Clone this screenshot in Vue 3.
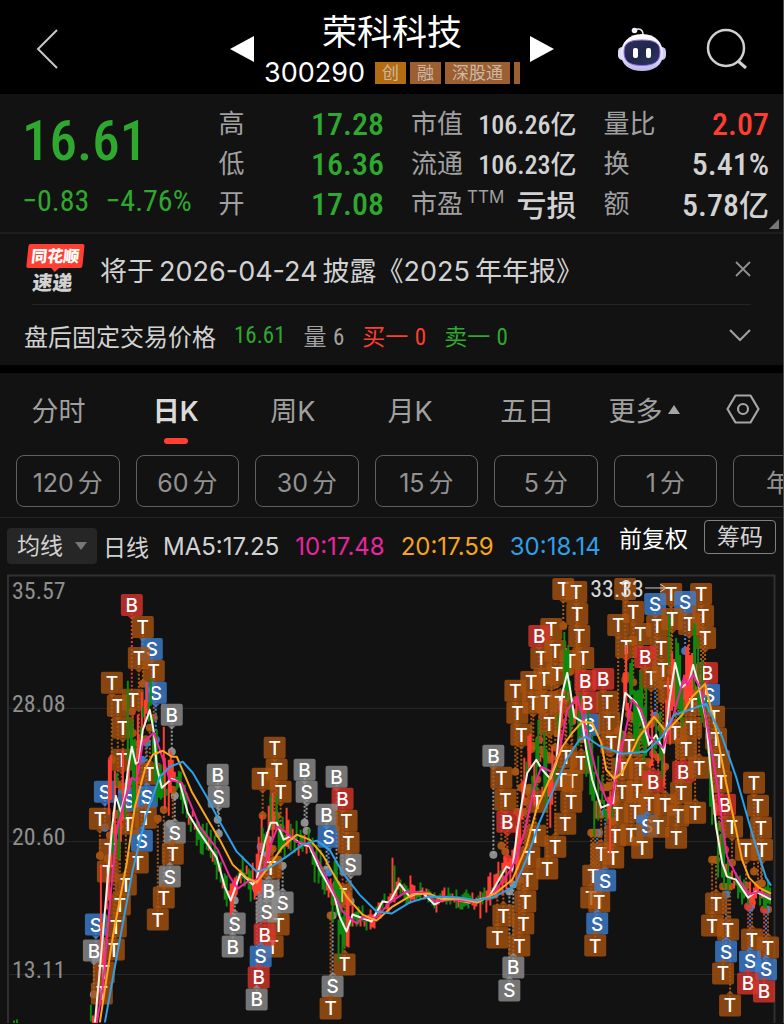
<template>
  <div class="stock-page">
    <header class="top-bar">
      <button class="icon-btn back" aria-label="返回">
        <svg width="24" height="42" viewBox="0 0 24 42"><path d="M21 2 2 21 21 40" fill="none" stroke="#c8c8c8" stroke-width="2" /></svg>
      </button>
      <div class="title-wrap">
        <button class="icon-btn" aria-label="上一只">
          <svg width="24" height="26" viewBox="0 0 24 26"><path d="M24 0V26L0 13Z" fill="#fff" /></svg>
        </button>
        <div class="title">
          <h1>荣科科技</h1>
          <div class="code-row">
            <span class="code">300290</span>
            <span class="tag tag-main">创</span>
            <span class="tag">融</span>
            <span class="tag">深股通</span>
            <span class="tag tag-cut"></span>
          </div>
        </div>
        <button class="icon-btn" aria-label="下一只">
          <svg width="24" height="26" viewBox="0 0 24 26"><path d="M0 0V26L24 13Z" fill="#fff" /></svg>
        </button>
      </div>
      <div class="top-actions">
        <button class="icon-btn" aria-label="智能助手">
          <svg width="48" height="46" viewBox="0 0 48 46">
            <defs>
              <linearGradient id="shell" x1="0" y1="0" x2="0" y2="1">
                <stop offset="0" stop-color="#ffffff" />
                <stop offset="0.6" stop-color="#e4e2fa" />
                <stop offset="1" stop-color="#b9b5ee" />
              </linearGradient>
              <linearGradient id="visor" x1="0" y1="0" x2="1" y2="1">
                <stop offset="0" stop-color="#30305c" />
                <stop offset="0.5" stop-color="#20264a" />
                <stop offset="1" stop-color="#303763" />
              </linearGradient>
            </defs>
            <path d="M17 4C21 2 25 3 25 9" fill="none" stroke="#e6e6f5" stroke-width="1.500" />
            <circle cx="16.500" cy="4.500" r="2.800" fill="#f2f2fb" />
            <rect x="0" y="21" width="9" height="13" rx="4.500" fill="#dddcf5" />
            <rect x="39" y="21" width="9" height="13" rx="4.500" fill="#cfcdf2" />
            <path d="M24 8C38 8 45 17 45 28C45 39 36 45 24 45C12 45 3 39 3 28C3 17 10 8 24 8Z" fill="url(#shell)" />
            <path d="M24 14C37 14 42 17 42 26C42 36 36 39.500 24 39.500C12 39.500 6 36 6 26C6 17 11 14 24 14Z" fill="url(#visor)" stroke="#8e6ce8" stroke-width="1" />
            <rect x="15" y="22" width="5" height="10" rx="2" fill="#fff" />
            <rect x="28" y="22" width="5" height="10" rx="2" fill="#fff" />
          </svg>
        </button>
        <button class="icon-btn" aria-label="搜索">
          <svg width="42" height="42" viewBox="0 0 42 42" fill="none" stroke="#d0d0d0" stroke-width="2.500">
            <circle cx="20" cy="20" r="18" />
            <path d="M32 33 40 40" stroke-width="3" />
          </svg>
        </button>
      </div>
    </header>

    <section class="quote">
      <div class="price-box">
        <div class="price">16.61</div>
        <div class="change"><span>−0.83</span><span>−4.76%</span></div>
      </div>
      <dl v-for="(col, i) in quoteCols" :key="i" class="quote-col">
        <div v-for="item in col" :key="item.label">
          <dt>{{ item.label }}<sup v-if="item.sup">{{ item.sup }}</sup></dt>
          <dd :class="item.cls">{{ item.value }}<span v-if="item.unit" class="unit">{{ item.unit }}</span></dd>
        </div>
      </dl>
      <span class="corner"></span>
    </section>

    <section class="notice">
      <div class="notice-row news">
        <div class="logo"><span class="logo-top">同花顺</span><span class="logo-bottom">速递</span></div>
        <a href="#" class="news-link">将于<span class="latin">2026-04-24</span>披露《<span class="latin year">2025</span>年年报》</a>
        <button class="icon-btn close" aria-label="关闭">
          <svg width="16" height="16" viewBox="0 0 16 16"><path d="M1 1 15 15M15 1 1 15" stroke="#909090" stroke-width="1.800" /></svg>
        </button>
      </div>
      <div class="notice-row after">
        <span class="after-name">盘后固定交易价格</span>
        <span class="num green">16.61</span>
        <span class="muted">量 <b class="num">6</b></span>
        <span class="red">买一 <b class="num">0</b></span>
        <span class="green">卖一 <b class="num">0</b></span>
        <button class="icon-btn close" aria-label="展开">
          <svg width="22" height="13" viewBox="0 0 22 13"><path d="M1 1 11 11 21 1" fill="none" stroke="#a0a0a0" stroke-width="2" /></svg>
        </button>
      </div>
    </section>

    <nav class="tabs">
      <button
        v-for="tab in tabs"
        :key="tab"
        :class="{ active: tab === currentTab }"
        @click="currentTab = tab"
      >{{ tab }}<i v-if="tab === '更多'" class="up"></i></button>
      <button class="gear" aria-label="设置">
        <svg width="34" height="30" viewBox="0 0 34 30" fill="none" stroke="#a6a6a6" stroke-width="2.200">
          <path d="M9.500 1.500H24.500L32.500 15 24.500 28.500H9.500L1.500 15Z" stroke-linejoin="round" />
          <circle cx="17" cy="15" r="5" />
        </svg>
      </button>
    </nav>

    <div class="periods">
      <button v-for="p in periods" :key="p.unit + p.n"><span class="latin">{{ p.n }}</span>{{ p.unit }}</button>
    </div>

    <div class="toolbar">
      <label class="picker">
        <select v-model="indicator" aria-label="指标">
          <option>均线</option>
          <option>BOLL</option>
        </select>
      </label>
      <span class="ma-name">日线</span>
      <span class="ma ma5">MA5:17.25</span>
      <span class="ma ma10">10:17.48</span>
      <span class="ma ma20">20:17.59</span>
      <span class="ma ma30">30:18.14</span>
      <span class="rights">
        <button class="adjust">前复权</button>
        <button class="chips">筹码</button>
      </span>
    </div>

    <svg class="chart" viewBox="0 574 784 450">
      <g stroke="#303030">
        <path d="M8 1024V575.500H775.500V1024" fill="none" stroke-width="2" />
        <path v-for="y in [708.5, 842, 975]" :key="y" :d="`M8 ${y}H775`" stroke="#292929" />
      </g>
      <g class="axis">
        <text x="12" y="599">35.57</text>
        <text x="12" y="712">28.08</text>
        <text x="12" y="845">20.60</text>
        <text x="12" y="979">13.11</text>
      </g>
      <g v-for="(m, i) in marks" :key="'s' + i" :stroke="m.line" :fill="m.line">
        <path :d="`M${m.x} ${m.y}V${m.end}`" stroke-width="2" stroke-dasharray="2 2" />
        <circle :cx="m.x" :cy="m.end" r="4" stroke="none" opacity="0.9" />
      </g>
      <g v-for="(m, i) in marks" :key="'m' + i">
        <rect :x="m.x - 11" :y="m.y - 11" width="22" height="22" rx="2" :fill="m.fill" fill-opacity="0.8" />
        <path :d="m.tip" :fill="m.fill" fill-opacity="0.8" />
        <text class="mark" :x="m.x" :y="m.y + 7">{{ m.letter }}</text>
      </g>
      <path :d="candles.up" stroke="#ff3e31" stroke-width="2" />
      <path :d="candles.down" stroke="#0d8a0d" stroke-width="2" />
      <polyline v-for="l in maLines" :key="l.color" :points="l.points" :stroke="l.color" class="ma-line" />
      <text class="peak" x="591" y="597">33.33</text>
      <path d="M646 588H667M661 584 667 588 661 592" fill="none" stroke="#ccc" />
    </svg>
  </div>
</template>

<script setup>
import { ref } from 'vue'

const quoteCols = [
  [
    { label: '高', value: '17.28', cls: 'green' },
    { label: '低', value: '16.36', cls: 'green' },
    { label: '开', value: '17.08', cls: 'green' }
  ],
  [
    { label: '市值', value: '106.26', unit: '亿', cls: 'small' },
    { label: '流通', value: '106.23', unit: '亿', cls: 'small' },
    { label: '市盈', sup: 'TTM', value: '', unit: '亏损' }
  ],
  [
    { label: '量比', value: '2.07', cls: 'red' },
    { label: '换', value: '5.41%' },
    { label: '额', value: '5.78', unit: '亿' }
  ]
]

const tabs = ['分时', '日K', '周K', '月K', '五日', '更多']
const currentTab = ref('日K')
const indicator = ref('均线')

const periods = [
  { n: '120', unit: '分' },
  { n: '60', unit: '分' },
  { n: '30', unit: '分' },
  { n: '15', unit: '分' },
  { n: '5', unit: '分' },
  { n: '1', unit: '分' },
  { n: '', unit: '年K' }
]

const ma5 = '95,1023 100,970 108,877 112,830 116,796 121,812 125,797 128,770 132,747 136,764 139,762 143,730 150,710 154,732 157,767 162,788 172,779 180,783 188,813 200,833 217,858 225,887 231,901 241,873 253,885 257,880 265,843 271,823 277,823 284,840 290,837 300,843 310,847 320,870 335,897 340,917 347,932 353,915 372,922 383,902 390,903 400,884 410,897 422,892 435,905 447,898 470,903 490,897 507,867 513,870 518,830 523,800 528,773 537,760 543,770 551,779 557,763 563,693 568,673 571,690 575,717 583,722 587,750 593,780 602,808 614,803 618,757 626,693 637,703 643,720 650,745 657,735 665,753 670,703 676,663 682,688 690,682 694,665 700,687 707,720 712,777 717,827 723,863 728,877 737,880 749,898 757,892 772,900'
const ma10 = '97,1023 103,987 110,903 117,830 125,800 132,778 137,781 143,743 154,733 160,750 170,780 182,783 200,827 218,850 230,877 238,889 248,882 257,880 263,873 272,843 278,827 287,833 297,842 310,845 323,870 333,890 343,912 357,924 363,918 377,918 390,903 407,892 427,893 435,902 453,900 475,903 493,895 510,872 515,863 525,833 535,787 542,767 552,772 560,753 568,710 578,697 587,730 597,773 607,800 612,805 620,760 633,700 642,710 650,737 664,748 673,720 685,677 688,685 694,675 702,690 710,737 718,783 724,830 728,857 737,875 750,895 760,892 772,897'
const ma20 = '100,1023 113,937 127,863 135,807 145,770 153,755 163,751 172,757 177,757 192,792 207,818 220,840 233,865 247,878 257,883 272,863 283,847 297,835 310,840 323,855 333,873 347,897 363,915 377,921 393,907 413,895 430,894 443,900 460,899 478,903 497,893 513,880 527,847 537,810 550,780 563,747 573,733 583,722 593,723 602,743 607,770 615,779 623,773 640,737 655,717 667,732 683,715 693,697 706,684 717,730 727,783 737,830 743,860 750,878 760,888 772,894'
const ma30 = '105,1023 120,940 133,870 147,813 160,777 170,767 183,762 193,773 207,797 220,822 237,852 257,872 270,868 287,857 303,845 317,841 330,850 343,873 360,895 377,912 392,914 410,903 430,897 460,898 477,901 493,898 515,887 527,860 540,823 553,793 567,760 580,740 587,737 600,746 623,754 647,752 663,737 675,715 690,710 707,704 723,737 737,777 750,823 758,850 767,878 772,886'

const maLines = [
  { color: '#f2f2e8', points: ma5 },
  { color: '#f0269c', points: ma10 },
  { color: '#ffa51c', points: ma20 },
  { color: '#2f9fe8', points: ma30 }
]

const pts = ma5.split(' ').map(p => p.split(',').map(Number))
const priceAt = x => {
  const i = pts.findIndex(p => p[0] >= x)
  if (i < 0) return pts[pts.length - 1][1]
  if (i === 0) return pts[0][1]
  const [x0, y0] = pts[i - 1]
  const [x1, y1] = pts[i]
  return y0 + ((y1 - y0) * (x - x0)) / (x1 - x0)
}

// how far the wicks reach on each stretch: [until x, reach]
const reach = [[105, 26], [160, 48], [175, 36], [215, 18], [255, 19], [280, 36], [330, 20], [352, 34], [385, 12], [480, 9], [515, 20], [620, 44], [705, 46], [730, 36], [780, 13]]
const reachAt = x => reach.find(r => x <= r[0])[1]

// candles step 2 units apart around the short average
const candles = { up: '', down: 'M14 1024V1021M17 1024V1020' }
for (let x = 91; x <= 772; x += 2) {
  const noise = Math.abs(Math.sin(x * 12.9898) * 43758.5453) % 1
  const noise2 = Math.abs(Math.sin(x * 7.233) * 9631.77) % 1
  const r = reachAt(x)
  const mid = priceAt(x) + (noise - 0.5) * r
  const half = 3 + noise2 * r * 0.7
  const rising = priceAt(x + 3) < priceAt(x - 3)
  const key = (noise2 > 0.25) === rising ? 'up' : 'down'
  candles[key] += `M${x} ${Math.round(mid - half)}V${Math.round(mid + half)}`
}
candles.up += 'M164 727V790M262 815V860M393 858V892M411 876V900M287 808V840M142 692V745M138 715V760M109 760V815M111 755V800M101 865V930'
candles.down += 'M128 681V760M132 720V770M271 796V830M395 866V895M339 920V962M565 632V690M567 650V700M670 615V665M696 625V680'

const palette = {
  T: { fill: '#a85310', line: '#b35a14' },
  R: { fill: '#d8342c', line: '#e2382f' },
  S: { fill: '#3f7ed0', line: '#3f86e0' },
  B: { fill: '#8f8f8f', line: '#9a9a9a' }
}

// colour, letter, x, y, optional end of the stem
const rawMarks = `
RB 132 605 712|TT 143 627 684|SS 152 649 690|TT 139 658|TT 154 671 718|TT 112 683 760|SS 156 693 740|TT 118 706|TT 133 700|TT 123 728|BB 172 715 752|TT 122 760
SS 105 792 828|SS 129 801|TT 150 774|SS 147 797 743|TT 146 818|SS 142 841 760|TT 138 863|TT 100 819 856|TT 128 824|TT 110 850|TT 108 872|TT 126 885|TT 120 905|TT 116 927|TT 114 950|TT 104 973|TT 102 994|SS 96 925 960|BB 94 951 995
BS 175 833 796|TT 173 854 790|BS 170 877 824|TT 164 898 810|TT 158 920 819|BB 218 775 820|BS 219 797 834|BS 235 924 901|BB 233 947 895
TT 275 748 815|TT 277 770 816|TT 263 779 816|TT 281 792 828|BB 305 770 823|BS 307 792 831|BB 337 777 885|RB 343 799 890|BB 327 815 870|SS 329 837 873|TT 347 821 895|TT 349 843 898|BS 351 865 902
TT 271 868 850|TT 279 925 860|TT 273 947 849|BS 283 903 866|BB 269 891 840|BS 267 912|RB 265 935|SS 261 957 847|RB 259 978 890|BB 257 1000 890|TT 342 895|TT 345 965 895|BS 333 987 916|TT 331 1009 916
TT 564 589 626|TT 577 592|TT 578 614|TT 580 636|TT 584 658|TT 552 629|RB 540 636 740|TT 542 658|TT 556 651|TT 571 661|TT 558 674|TT 545 679|TT 532 682|TT 516 691 772|TT 534 703|TT 547 702|TT 561 703|TT 518 713|TT 522 735|TT 550 724|RB 586 681 720|RB 588 703|SS 590 725|RB 604 679 788
BB 494 756 855|TT 502 778 846|TT 506 800 852|RB 508 822 859|TT 567 757|TT 582 763|TT 573 781|TT 562 780|TT 572 802|TT 538 802|TT 566 824|TT 536 836|TT 556 847|TT 530 858|TT 548 869|TT 528 880|TT 526 902|TT 524 924|TT 520 946 880|TT 504 916 880|TT 498 938 890|BB 514 968 885|BS 510 991 892
TT 602 854 815|TT 594 876 833|TT 592 898 833|TT 600 902 833|SS 606 881 813|SS 598 924 833|TT 596 946 833
TT 626 589 680|TT 672 594|TT 702 594|SS 656 604 716|SS 686 602 651|TT 634 612|TT 619 625|TT 641 634|TT 627 647|TT 658 626|TT 662 648|RB 646 657 730|TT 652 678|TT 664 670|TT 670 692|TT 673 619|TT 690 624|TT 704 616|TT 706 638|RB 708 673|SS 710 695|TT 715 717|TT 717 739|TT 720 761|TT 722 782|RB 726 805 850|TT 733 827 863
TT 608 702|TT 610 723|TT 612 743|TT 630 746|TT 623 769|TT 641 769|RB 654 782 754|RB 684 772 740|TT 693 705|TT 692 728|TT 676 733|TT 687 749|TT 700 768|TT 623 792|TT 638 791|TT 650 804|TT 682 793|TT 666 805 767|TT 696 813|TT 636 812|TT 618 814|TT 679 816|SS 648 826 778|TT 659 827|TT 632 835|TT 677 838|TT 643 848|TT 616 836|TT 614 858
TT 755 783 872|TT 759 806 885|TT 762 828 884|TT 763 850 884|TT 747 850 886|TT 717 904 860|TT 713 926 860|TT 729 930 887|SS 727 952 895|TT 724 974 887|TT 731 1006 887|TT 753 940 903|TT 769 948 910|SS 751 962 908|SS 767 970 910|RB 749 984 907|RB 765 992 910`

const marks = rawMarks.trim().split(/[|\n]/).map(row => {
  const [kind, x, y, e] = row.split(' ')
  const cx = Number(x)
  const cy = Number(y)
  const base = priceAt(cx)
  const end = e ? Number(e) : base + (cy < base ? -18 : 18)
  // the small tip points from the box to its candle
  const d = cy < end ? 1 : -1
  const tip = `M${cx - 4} ${cy + 11 * d}H${cx + 4}L${cx} ${cy + 15 * d}Z`
  return { letter: kind[1], x: cx, y: cy, end, tip, ...palette[kind[0]] }
})
</script>

<style>
body {
  margin: 0;
  background: #121212;
}
</style>

<style scoped>
.stock-page {
  border-right: 1px solid #4c4c4c;
  background: #121212;
  color: #d2d2d2;
  font-family: Inter, "Noto Sans CJK SC", sans-serif;
  overflow: hidden;
}

button {
  padding: 0;
  border: 0;
  background: none;
  color: inherit;
  font: inherit;
  cursor: pointer;
}

.icon-btn {
  display: flex;
}

.green {
  color: #2ea82e;
}

.red {
  color: #ff3d30;
}

.muted {
  color: #a2a2a2;
}

.latin {
  font-family: Inter, sans-serif;
}

.num {
  font-family: "Roboto Condensed", Roboto, sans-serif;
  font-weight: 400;
}

.top-bar {
  display: grid;
  grid-template-columns: 1fr auto 1fr;
  align-items: center;
  height: 94px;
  padding: 3px 35px 0 36px;
  box-sizing: border-box;
  background: #000;
}

.title-wrap {
  display: flex;
  align-items: center;
  gap: 10px;
}

.title {
  display: flex;
  flex-direction: column;
  align-items: center;
  gap: 4px;
}

.title h1 {
  margin: 0;
  color: #fff;
  font-size: 35px;
  font-weight: 400;
  line-height: 44px;
}

.code-row {
  display: flex;
  align-items: center;
  gap: 4px;
  height: 30px;
}

.code {
  margin-right: 6px;
  color: #fff;
  font-size: 27px;
  line-height: 30px;
}

.tag {
  padding: 0 7px;
  background: #9c5f31;
  color: #cbb9a8;
  font-size: 17px;
  line-height: 22px;
}

.tag-main {
  background: #b36c0f;
}

.tag-cut {
  width: 6px;
  height: 22px;
  padding: 0;
}

.top-actions {
  display: flex;
  align-items: center;
  justify-content: flex-end;
  gap: 40px;
}

.quote {
  position: relative;
  display: grid;
  grid-template-columns: minmax(0, 170fr) 166fr 166fr 166fr;
  column-gap: 27px;
  padding: 10px 14px 8px 22px;
  border-bottom: 2px solid #1e1e1e;
}

.price-box {
  color: #2ea82e;
  font-family: "Roboto Condensed", Roboto, sans-serif;
  white-space: nowrap;
}

.price {
  font-size: 55px;
  font-weight: 500;
  line-height: 74px;
}

.change {
  display: flex;
  gap: 16px;
  font-size: 30px;
  line-height: 46px;
}

.quote-col {
  margin: 0;
}

.quote-col div {
  display: flex;
  align-items: center;
  justify-content: space-between;
  height: 40px;
  white-space: nowrap;
}

.quote-col dt {
  color: #a0a0a0;
  font-size: 26px;
  line-height: 36px;
}

.quote-col sup {
  margin-left: 4px;
  font-size: 17px;
  line-height: 1;
}

.quote-col dd {
  margin: 0;
  font-family: "Roboto Condensed", Roboto, sans-serif;
  font-size: 32px;
  font-weight: 500;
  line-height: 36px;
}

.quote-col dd.small {
  font-size: 26px;
}

.unit {
  font-family: "Noto Sans CJK SC", sans-serif;
  font-size: 30px;
  line-height: 36px;
}

.small .unit {
  font-size: 26px;
}

.corner {
  position: absolute;
  right: 4px;
  bottom: 3px;
  border-bottom: 10px solid #777;
  border-left: 10px solid transparent;
}

.notice {
  border-bottom: 8px solid #000;
}

.notice-row {
  display: flex;
  align-items: center;
}

.news {
  height: 70px;
  margin: 0 32px;
  border-bottom: 1px solid #242424;
}

.logo {
  display: flex;
  flex-direction: column;
  align-items: center;
  gap: 3px;
  width: 56px;
  margin-left: -6px;
  font-weight: 900;
  line-height: 24px;
  transform: skewX(-6deg);
}

.logo-top {
  position: relative;
  width: 56px;
  border-radius: 2px;
  background: #ff3f31;
  color: #fff;
  font-size: 16px;
  text-align: center;
}

.logo-top::after {
  content: "";
  position: absolute;
  top: 24px;
  left: 25px;
  border: 4px solid transparent;
  border-top-color: #ff3f31;
  border-bottom: 0;
}

.logo-bottom {
  font-size: 20px;
}

.news-link {
  margin-left: 18px;
  color: #d2d2d2;
  font-size: 27px;
  text-decoration: none;
  white-space: nowrap;
}

.news-link .latin {
  margin: 0 5px;
}

.news-link .year {
  margin-left: 0;
}

.close {
  margin-left: auto;
}

.after {
  gap: 18px;
  height: 60px;
  margin: 0 32px 0 24px;
  font-size: 23px;
}

.after-name {
  font-size: 24px;
}

.tabs {
  display: flex;
  height: 72px;
  padding-bottom: 2px;
  color: #a0a0a0;
  font-size: 27px;
}

.tabs button {
  position: relative;
  display: flex;
  flex: 1;
  align-items: center;
  justify-content: center;
}

.tabs .gear {
  flex: 0 0 80px;
}

.tabs .active {
  color: #dadada;
  font-weight: 600;
}

.tabs .active::after {
  content: "";
  position: absolute;
  bottom: 1px;
  left: calc(50% - 12px);
  width: 24px;
  height: 6px;
  border-radius: 3px;
  background: #ff3f31;
}

.up {
  margin-left: 6px;
  border: 6px solid transparent;
  border-top: 0;
  border-bottom: 9px solid #a6a6a6;
}

.periods {
  display: flex;
  gap: 16px;
  padding: 8px 0 10px 16px;
  border-bottom: 1px solid #242424;
}

.periods button {
  flex: 0 0 13.5%;
  height: 52px;
  box-sizing: border-box;
  border: 1px solid #606060;
  border-radius: 8px;
  color: #929292;
  font-size: 25px;
}

.periods .latin {
  margin-right: 4px;
}

.toolbar {
  display: flex;
  align-items: center;
  height: 56px;
  padding: 0 7px;
  font-size: 23px;
  white-space: nowrap;
}

.picker {
  position: relative;
}

.picker select {
  width: 90px;
  height: 36px;
  padding: 0 10px;
  border: 0;
  border-radius: 4px;
  background: #262626;
  color: #d2d2d2;
  font: inherit;
  appearance: none;
}

.picker::after {
  content: "";
  position: absolute;
  top: 14px;
  right: 10px;
  border: 6px solid transparent;
  border-top: 8px solid #777;
  border-bottom: 0;
}

.ma-name {
  margin: 0 14px 0 6px;
}

.ma {
  margin-right: 16px;
  font-size: 24px;
}

.ma10 {
  color: #e8269c;
}

.ma20 {
  color: #f5a51c;
}

.ma30 {
  margin-right: 0;
  color: #2f9fe8;
}

.rights {
  display: flex;
  gap: 16px;
  margin: 0 0 18px auto;
  color: #fff;
}

.chips {
  padding: 0 12px;
  border: 1px solid #808080;
  border-radius: 4px;
  color: #d2d2d2;
  line-height: 30px;
}

.chart {
  display: block;
  width: 100%;
}

.axis text {
  fill: #8e8e8e;
  font: 400 24px "Roboto Condensed", Roboto, sans-serif;
}

.peak {
  fill: #d8d8d8;
  font: 400 24px "Roboto Condensed", Roboto, sans-serif;
}

.mark {
  fill: #fff;
  font: 500 19px Inter, sans-serif;
  text-anchor: middle;
}

.ma-line {
  fill: none;
  stroke-width: 2;
  stroke-linejoin: round;
}
</style>
